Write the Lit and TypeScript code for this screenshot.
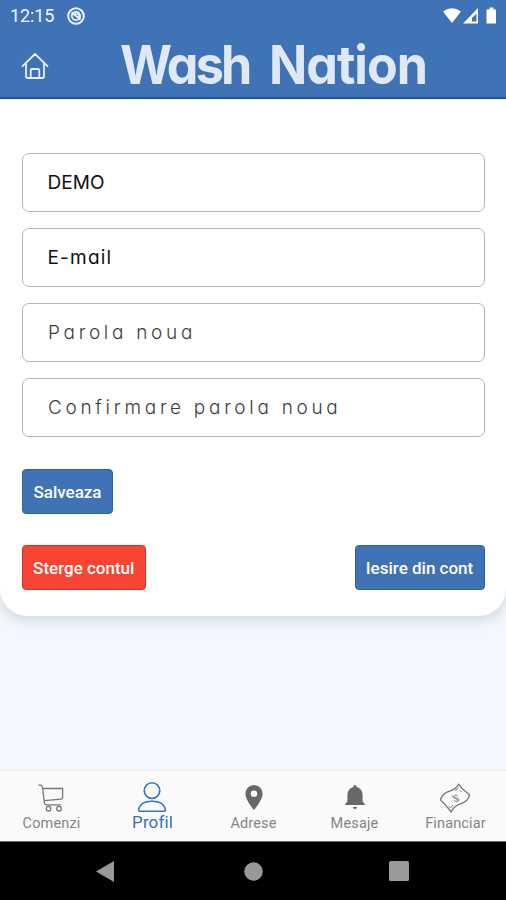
import { LitElement, html, css, svg } from "lit";
import { customElement } from "lit/decorators.js";

const cart = svg`<svg class="icon line" width="26" height="28" viewBox="0 0 26 28">
  <path d="M.5 1.200h2.800l1.200 2.300 2 15.800q.2 1.500 1.500 1.500H23M4.600 4.500h20v9.200Q24.500 15 23 15.100L6.500 16.700" /><circle cx="10.500" cy="24.700" r="2.300" /><circle cx="21" cy="24.700" r="2.300" /></svg>`;
const user = svg`<svg class="icon line" width="30" height="32" viewBox="0 0 30 32">
  <circle cx="15" cy="9.600" r="7.800" /><path d="M3.500 30.300Q1.300 30.300 1.700 28C3 22.300 8 20.200 15 20.200S27 22.300 28.300 28Q28.700 30.300 26.500 30.300Z" /></svg>`;
const pin = svg`<svg class="icon solid" width="18" height="25" viewBox="0 0 18 25">
  <path fill-rule="evenodd" d="M9 0a8.600 8.600 0 0 0-8.600 8.700C.4 15.200 9 25 9 25s8.600-9.800 8.600-16.300A8.600 8.600 0 0 0 9 0Zm0 5.500a3.200 3.200 0 1 1 0 6.400a3.200 3.200 0 0 1 0-6.400Z" /></svg>`;
const bell = svg`<svg class="icon solid" width="20" height="25" viewBox="0 0 20 25">
  <path d="M10 0c1.100 0 1.600.8 1.600 2 4 1 6 4.300 6 8.300v6.200l2.200 2.400v1.200H.2v-1.200l2.200-2.400v-6.200c0-4 2-7.300 6-8.300 0-1.200.5-2 1.600-2ZM7.800 22.100h4.400c-.2 1.300-1 2-2.200 2s-2-.7-2.200-2Z" /></svg>`;
const money = svg`<svg class="icon line" width="32" height="32" viewBox="0 0 32 32">
  <path d="M1.500 18C3 12.500 6.500 10.500 10.500 9.200C14.500 7.800 18 6 19.500 2.200C22 5.800 26 9.800 30.500 12.800C29.500 17.800 25.500 20.500 21.500 21.800C17 23.300 14 25.500 12.300 30C9.300 26 5.500 21.700 1.500 18Z" />
  <path class="fine" d="M12.800 13.800l6.800 5M18.700 14.200c-1.400-2-4.800-.5-3.600 1.300 1 1.400 3.500-.2 4.400 1.400 1 2-2 3.500-4.200 1.700M16.200 8.500l3-2.200M22.500 9.800l-1.500-1.600M9.800 24.200l1.700 1.700 2.500-3" /></svg>`;

const tabs = [
  { name: "Comenzi", icon: cart },
  { name: "Profil", icon: user, active: true },
  { name: "Adrese", icon: pin },
  { name: "Mesaje", icon: bell },
  { name: "Financiar", icon: money },
];

@customElement("app-root")
export class AppRoot extends LitElement {
  static styles = css`
    :host { display: flex; flex-direction: column; width: 506px; height: 900px; overflow: hidden; background: #f4f8fe; font-family: Roboto, sans-serif; }
    * { box-sizing: border-box; }
    svg { display: block; flex: none; }
    header { height: 99px; flex: none; background: #4072b6; border-bottom: 2px solid #1557a8; }
    .status { height: 32px; display: flex; align-items: center; padding: 0 8px 0 10px; color: #f4f7fd; }
    .time { font-size: 18px; line-height: 20px; letter-spacing: -.1px; width: 56px; }
    .signals { margin-left: auto; }
    .brand { height: 65px; display: flex; align-items: center; padding-left: 21px; }
    .home { fill: none; stroke: #e7effb; stroke-width: 1.8; stroke-linejoin: round; stroke-linecap: round; margin-top: 2px; }
    h1 { display: flex; gap: 21px; margin: 1px 0 0 71px; font: 700 54px/60px Inter, sans-serif; font-feature-settings: "cv11"; color: #dfe8f5; white-space: nowrap; transform: scaleX(.93); transform-origin: left; }
    .wash { letter-spacing: -3px; }
    .nation { letter-spacing: -1.100px; }
    main { height: 517px; flex: none; padding: 54px 21.500px 0 22px; background: #fff; border-radius: 0 0 27px 27px; box-shadow: 0 4px 14px rgba(60, 70, 90, .2); }
    .fields { display: grid; gap: 16px; }
    input { width: 100%; height: 59px; border: 1.500px solid #b4b4b4; border-radius: 7px; padding: 0 25px 0 24.500px; background: #fff; outline: 0; color: #111; font: 400 19px Inter, sans-serif; font-feature-settings: "cv11"; letter-spacing: .1px; }
    input::placeholder { color: #3d3d3d; opacity: 1; }
    .mail { letter-spacing: 1.200px; }
    .secret { font-weight: 300; letter-spacing: 3.700px; padding-left: 25px; }
    .actions { display: flex; justify-content: space-between; margin-top: 31px; }
    .fields + .actions { margin-top: 32px; }
    button { height: 45px; border: 1px solid #2864ad; border-radius: 4px; padding: 0; background: #4072b6; color: #fff; font: 500 17px Roboto, sans-serif; white-space: nowrap; }
    .save { width: 91px; }
    .logout { width: 130px; }
    .delete { width: 123.500px; background: #f84434; border-color: #e02e20; }
    nav { height: 71px; margin-top: auto; flex: none; display: grid; grid-template-columns: repeat(5, 1fr); padding-left: 1px; background: #fafafa; border-top: 1px solid #ececf0; }
    .tab { display: flex; flex-direction: column; align-items: center; color: #858585; font-size: 14.500px; letter-spacing: .15px; }
    .pic { height: 44px; display: grid; place-items: center; padding-top: 9px; }
    .label { line-height: 18px; }
    .active { color: #3a70bb; font-size: 17px; letter-spacing: .1px; }
    .active .pic { height: 42px; padding-top: 9px; }
    .icon { fill: none; stroke: #777; stroke-width: 1.300; stroke-linejoin: round; }
    .line { margin-right: 2px; }
    .active .icon { stroke: #3a73c2; stroke-width: 1.600; }
    .solid { fill: #686868; stroke: none; }
    .fine { stroke-width: 1; }
    footer { height: 59px; flex: none; background: #000; border-top: 1px solid #666; display: flex; justify-content: space-between; align-items: center; padding: 0 97px 0 96px; fill: #999; }
    .round { margin-left: 3px; }
  `;

  render() {
    return html`
      <header>
        <div class="status">
          <span class="time">12:15</span>
          <svg width="20" height="20" viewBox="0 0 20 20" fill="none" stroke="#eef4ff" stroke-width="2">
            <circle cx="10" cy="10" r="7.800" /><circle cx="10" cy="10" r="4.200" stroke-width="1.700" /><path d="M5.500 6.500l9 7M9 8h4v4" stroke-width="1.600" />
          </svg>
          <svg class="signals" width="56" height="20" viewBox="0 0 56 20" fill="#fff">
            <path d="M1 5.500Q10-1 19 5.500L10 17Z" />
            <path fill-rule="evenodd" d="M36 2v15.500H21ZM34.500 7.500V15.500h-4.500V12Z" />
            <path d="M47.500 1.500h4v2h2.500v14H44.500v-14h3Z" />
          </svg>
        </div>
        <div class="brand">
          <svg class="home" width="28" height="28" viewBox="0 0 28 28">
            <path d="M1.500 14.200L14 2l12.500 12.200M5 11.500v12.800Q5 26 6.700 26h3V18.500q0-1.500 1.500-1.500h5.600q1.500 0 1.500 1.500V26h3Q23 26 23 24.300V11.500M10 26h8" />
          </svg>
          <h1><span class="wash">Wash</span> <span class="nation">Nation</span></h1>
        </div>
      </header>
      <main>
        <div class="fields">
          <input aria-label="Nume" value="DEMO" />
          <input class="mail" aria-label="E-mail" value="E-mail" />
          <input class="secret" type="password" placeholder="Parola noua" />
          <input class="secret" type="password" placeholder="Confirmare parola noua" />
        </div>
        <div class="actions"><button class="save">Salveaza</button></div>
        <div class="actions"><button class="delete">Sterge contul</button><button class="logout">Iesire din cont</button></div>
      </main>
      <nav>
        ${tabs.map((t) => html`<div class="tab ${t.active ? "active" : ""}"><div class="pic">${t.icon}</div><span class="label">${t.name}</span></div>`)}
      </nav>
      <footer>
        <svg width="18" height="21" viewBox="0 0 18 21"><path d="M18 0v21L0 10.500Z" /></svg>
        <svg class="round" width="19" height="19" viewBox="0 0 19 19"><circle cx="9.500" cy="9.500" r="9.300" /></svg>
        <svg width="20" height="20" viewBox="0 0 20 20"><rect width="20" height="20" rx="1.500" /></svg>
      </footer>
    `;
  }
}
